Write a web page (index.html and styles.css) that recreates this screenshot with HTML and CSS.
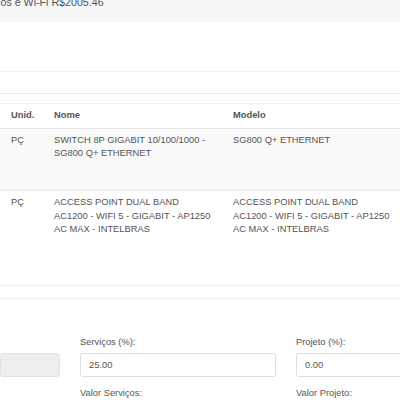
FILE: index.html
```html
<!DOCTYPE html>
<html lang="pt-BR">
<head>
<meta charset="utf-8">
<title>Orçamento</title>
<link rel="stylesheet" href="styles.css">
</head>
<body>
<div class="page">
  <div class="topbar"><span class="topbar-text">os e Wi-Fi R$2005.46</span></div>
  <div class="band band-a"></div>
  <div class="band band-b"></div>
  <div class="band band-c"></div>

  <div class="table">
    <div class="trow thead">
      <div class="cell">Unid.</div>
      <div class="cell">Nome</div>
      <div class="cell">Modelo</div>
    </div>
    <div class="trow striped">
      <div class="cell">PÇ</div>
      <div class="cell">SWITCH 8P GIGABIT 10/100/1000 - SG800 Q+ ETHERNET</div>
      <div class="cell">SG800 Q+ ETHERNET</div>
    </div>
    <div class="trow last">
      <div class="cell">PÇ</div>
      <div class="cell">ACCESS POINT DUAL BAND AC1200 - WIFI 5 - GIGABIT - AP1250 AC MAX - INTELBRAS</div>
      <div class="cell">ACCESS POINT DUAL BAND AC1200 - WIFI 5 - GIGABIT - AP1250 AC MAX - INTELBRAS</div>
    </div>
  </div>

  <div class="band band-d"></div>
  <div class="band band-e"></div>

  <div class="form">
    <div class="form-col">
      <div class="label label-empty"></div>
      <input class="input input-disabled" type="text" value="" disabled>
    </div>
    <div class="form-col">
      <label class="label">Serviços (%):</label>
      <input class="input" type="text" value="25.00">
      <label class="label label-next">Valor Serviços:</label>
    </div>
    <div class="form-col">
      <label class="label">Projeto (%):</label>
      <input class="input" type="text" value="0.00">
      <label class="label label-next">Valor Projeto:</label>
    </div>
  </div>
</div>
</body>
</html>
```

FILE: styles.css
```css
html, body {
  margin: 0;
  padding: 0;
  background: #ffffff;
  overflow: hidden;
}

.page {
  width: 400px;
  height: 400px;
  overflow: hidden;
  font-family: "Liberation Sans", Arial, Helvetica, sans-serif;
  color: #555555;
  font-size: 9.33px;
  line-height: 13.33px;
}

.topbar {
  height: 22px;
  background: #f5f6f6;
  overflow: hidden;
}

.topbar-text {
  display: block;
  margin-top: -4px;
  padding-left: 0.5px;
  font-size: 10.67px;
  line-height: 12px;
  color: #555555;
  white-space: nowrap;
}

.band { box-sizing: border-box; }

.band-a {
  height: 49.5px;
  border-bottom: 1px solid #f1f1f1;
}

.band-b {
  height: 22.5px;
  border-bottom: 1.5px solid #ebebeb;
}

.band-c {
  height: 10px;
  border-bottom: 1px solid #efefef;
}

.table {
  width: 412px;
}

.trow {
  display: grid;
  grid-template-columns: 49px 179px 184px;
  box-sizing: border-box;
}

.cell {
  padding: 5.33px 5px;
}

.trow .cell:first-child {
  padding-left: 11px;
}

.trow .cell:nth-child(2) {
  padding-right: 17px;
}

.trow .cell:nth-child(3) {
  padding-right: 21px;
}

.thead {
  height: 24.8px;
  border-bottom: 1.5px solid #e6e6e6;
  font-weight: bold;
  color: #555555;
}

.thead .cell {
  padding-top: 5px;
}

.striped {
  height: 62.2px;
  background: #f9f9f9;
  border-bottom: 1px solid #e8e8e8;
}

.last {
  height: 62px;
}

.band-d {
  height: 33px;
  border-bottom: 1.5px solid #ededed;
}

.band-e {
  height: 13.5px;
  border-bottom: 1px solid #f1f1f1;
}

.form {
  display: grid;
  grid-template-columns: 60px 196px 196px;
  column-gap: 20px;
  padding-top: 37px;
}

.form-col {
  display: flex;
  flex-direction: column;
}

.label {
  display: block;
  height: 13.33px;
  margin-bottom: 3.33px;
  color: #555555;
}

.label-next {
  margin-top: 10px;
}

.input {
  box-sizing: border-box;
  width: 100%;
  height: 24px;
  margin: 0;
  padding: 0 8px;
  border: 1px solid #dcdcdc;
  border-radius: 2.67px;
  background: #ffffff;
  font-family: "Liberation Sans", Arial, Helvetica, sans-serif;
  font-size: 9.33px;
  color: #555555;
}

.input-disabled {
  background: #eeeeee;
  border-color: #e2e2e2;
}
```
